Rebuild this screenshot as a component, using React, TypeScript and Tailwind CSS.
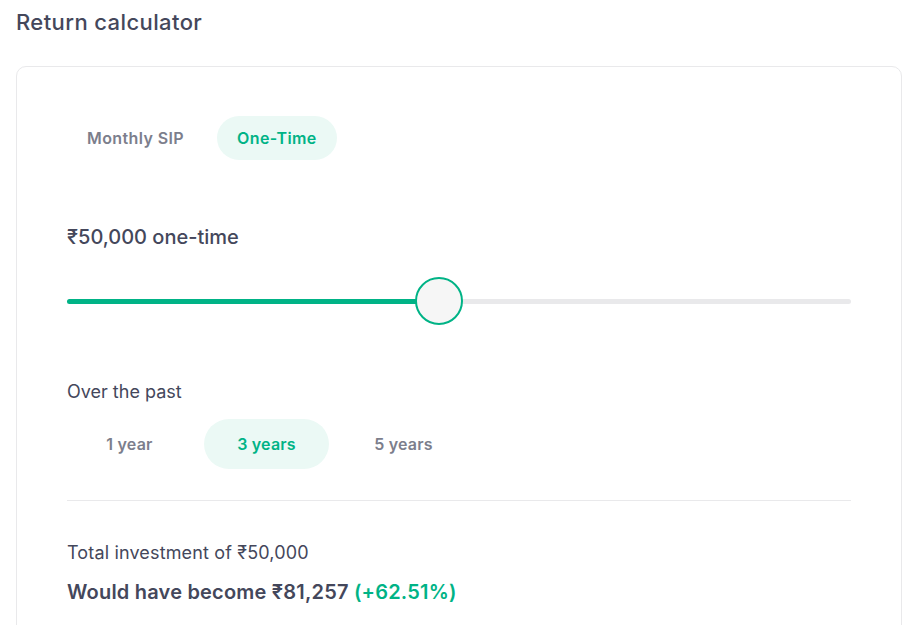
import { useState } from 'react'

const font = { fontFamily: 'Inter, "Noto Sans", "DejaVu Sans", sans-serif' }

export default function App() {
    const [mode, setMode] = useState('One-Time')
    const [period, setPeriod] = useState('3 years')
    const pct = 47.5

    return (
        <div className="min-h-screen bg-white pr-[10px] pl-4 text-[#44475b]" style={font}>
            <h1 className="pt-[8px] text-[22px] font-medium leading-[28px] tracking-[0.4px]">Return calculator</h1>

            {/* calculator card */}
            <div className="mt-[30px] rounded-[10px] border border-[#e9e9eb] px-[50px] pt-[49px] pb-10">
                <div className="flex gap-[13px]">
                    {['Monthly SIP', 'One-Time'].map(t => (
                        <button
                            key={t}
                            onClick={() => setMode(t)}
                            className={`h-11 rounded-full px-5 text-[16px] font-semibold tracking-[0.4px] ${mode === t ? 'bg-[#ebf9f5] text-[#00b386]' : 'text-[#7c7e8c]'}`}
                        >
                            {t}
                        </button>
                    ))}
                </div>

                <div className="mt-[63px] text-[20px] font-medium leading-[28px]">₹50,000 one-time</div>

                {/* slider */}
                <div className="relative mt-[26px] h-12">
                    <div className="absolute top-[22px] right-0 left-0 h-[5px] rounded-full bg-[#e9e9eb]" />
                    <div className="absolute top-[22px] left-0 h-[5px] rounded-full bg-[#00b386]" style={{ width: `${pct}%` }} />
                    <div
                        className="absolute top-0 h-12 w-12 -translate-x-1/2 rounded-full border-2 border-[#00b386] bg-[#f6f6f6]"
                        style={{ left: `${pct}%` }}
                    />
                </div>

                <div className="mt-[55px] text-[18px] leading-6">Over the past</div>

                <div className="mt-[15px] flex gap-3">
                    {['1 year', '3 years', '5 years'].map(p => (
                        <button
                            key={p}
                            onClick={() => setPeriod(p)}
                            className={`h-[50px] w-[125px] rounded-full text-[16px] font-semibold tracking-[0.2px] ${period === p ? 'bg-[#ebf9f5] text-[#00b386]' : 'text-[#7c7e8c]'}`}
                        >
                            {p}
                        </button>
                    ))}
                </div>

                <div className="mt-[31px] border-t border-[#e9e9eb]" />

                <div className="mt-[40px] text-[18px] leading-6 tracking-[0.15px]">Total investment of ₹50,000</div>
                <div className="mt-[13px] text-[20px] font-semibold leading-7 tracking-[0.2px]">
                    Would have become ₹81,257 <span className="text-[#00b386]">(+62.51%)</span>
                </div>
            </div>
        </div>
    )
}
